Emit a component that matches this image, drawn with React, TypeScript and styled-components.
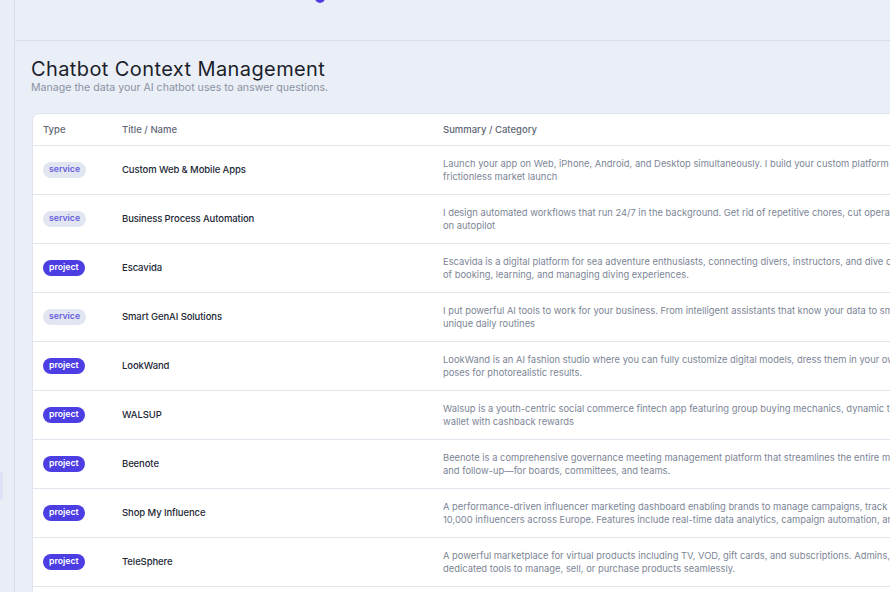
import styled, { createGlobalStyle } from "styled-components";

const GlobalStyle = createGlobalStyle`
  html, body {
    margin: 0;
    padding: 0;
    overflow: hidden;
    background: #eaeef6;
    font-family: Inter, "Liberation Sans", sans-serif;
  }
  * { box-sizing: border-box; }
`;

const Shell = styled.div`
  display: flex;
  width: 890px;
  height: 592px;
  overflow: hidden;
  background: #eaeef6;
`;

const Sidebar = styled.aside`
  flex: 0 0 15px;
  display: flex;
  flex-direction: column;
  padding-top: 472px;
  background: #e9edf5;
  border-right: 1px solid #d8dde7;
`;

const SideItem = styled.div`
  width: 3px;
  height: 28px;
  background: #dfe1f7;
  border-radius: 0 4px 4px 0;
`;

const Main = styled.main`
  flex: 1;
  min-width: 0;
  display: flex;
  flex-direction: column;
`;

const TopBar = styled.header`
  height: 41px;
  flex: 0 0 41px;
  border-bottom: 1px solid #d9dee8;
  display: flex;
  align-items: flex-start;
  padding-left: 300px;
`;

const Dot = styled.span`
  width: 10px;
  height: 10px;
  margin-top: -7px;
  border-radius: 50%;
  background: #4f3fe6;
`;

const Content = styled.section`
  padding: 16px 0 0 16px;
`;

const Title = styled.h1`
  margin: 0;
  font-size: 20px;
  line-height: 24px;
  font-weight: 400;
  color: #1b1e2b;
  letter-spacing: 0.4px;
`;

const Subtitle = styled.p`
  margin: 0;
  font-size: 10.6px;
  line-height: 14px;
  color: #8a92a2;
`;

const Card = styled.div`
  margin-top: 18px;
  margin-left: 1px;
  width: 1200px;
  background: #fff;
  border: 1px solid #dfe4ec;
  border-radius: 7px;
  overflow: hidden;
`;

const Table = styled.table`
  width: 100%;
  border-collapse: collapse;
  table-layout: fixed;
`;

const Th = styled.th<{ $w?: number }>`
  width: ${(p) => (p.$w ? `${p.$w}px` : "auto")};
  height: 31px;
  padding: 0 10px;
  text-align: left;
  font-size: 9.5px;
  font-weight: 500;
  color: #5f6776;
  border-bottom: 1px solid #e1e6ee;
`;

const Row = styled.tr`
  height: 49px;
  border-bottom: 1px solid #e1e6ee;
`;

const Td = styled.td`
  padding: 0 10px;
  vertical-align: middle;
  font-size: 10px;
  line-height: 13px;
`;

const Badge = styled.span<{ $kind: "service" | "project" }>`
  display: flex;
  width: fit-content;
  align-items: center;
  height: 16px;
  padding: 0 6px;
  border-radius: 8px;
  font-size: 8.7px;
  font-weight: 600;
  background: ${(p) => (p.$kind === "project" ? "#4c3ee3" : "#e1e6f0")};
  color: ${(p) => (p.$kind === "project" ? "#ffffff" : "#6a5fe0")};
`;

const Name = styled.div`
  font-size: 9.5px;
  line-height: 13px;
  font-weight: 500;
  letter-spacing: -0.1px;
  color: #232835;
`;

const Summary = styled.div`
  font-size: 9.4px;
  line-height: 13px;
  color: #7c8595;
  white-space: nowrap;
  span { display: block; }
`;

type Item = {
  kind: "service" | "project";
  name: string;
  lines: [string, string];
};

const items: Item[] = [
  {
    kind: "service",
    name: "Custom Web & Mobile Apps",
    lines: [
      "Launch your app on Web, iPhone, Android, and Desktop simultaneously. I build your custom platform once for a seamless and",
      "frictionless market launch",
    ],
  },
  {
    kind: "service",
    name: "Business Process Automation",
    lines: [
      "I design automated workflows that run 24/7 in the background. Get rid of repetitive chores, cut operational costs, and keep running",
      "on autopilot",
    ],
  },
  {
    kind: "project",
    name: "Escavida",
    lines: [
      "Escavida is a digital platform for sea adventure enthusiasts, connecting divers, instructors, and dive centers to simplify every step",
      "of booking, learning, and managing diving experiences.",
    ],
  },
  {
    kind: "service",
    name: "Smart GenAI Solutions",
    lines: [
      "I put powerful AI tools to work for your business. From intelligent assistants that know your data to smart automations tailored to your",
      "unique daily routines",
    ],
  },
  {
    kind: "project",
    name: "LookWand",
    lines: [
      "LookWand is an AI fashion studio where you can fully customize digital models, dress them in your own designs, and generate",
      "poses for photorealistic results.",
    ],
  },
  {
    kind: "project",
    name: "WALSUP",
    lines: [
      "Walsup is a youth-centric social commerce fintech app featuring group buying mechanics, dynamic tiered pricing, and a digital",
      "wallet with cashback rewards",
    ],
  },
  {
    kind: "project",
    name: "Beenote",
    lines: [
      "Beenote is a comprehensive governance meeting management platform that streamlines the entire meeting lifecycle—preparation, execution,",
      "and follow-up—for boards, committees, and teams.",
    ],
  },
  {
    kind: "project",
    name: "Shop My Influence",
    lines: [
      "A performance-driven influencer marketing dashboard enabling brands to manage campaigns, track sales, and collaborate with over",
      "10,000 influencers across Europe. Features include real-time data analytics, campaign automation, and transparent reporting.",
    ],
  },
  {
    kind: "project",
    name: "TeleSphere",
    lines: [
      "A powerful marketplace for virtual products including TV, VOD, gift cards, and subscriptions. Admins, resellers, and customers get",
      "dedicated tools to manage, sell, or purchase products seamlessly.",
    ],
  },
  {
    kind: "project",
    name: "Nomad Hub",
    lines: [
      "A collaborative workspace platform for remote teams, combining booking, scheduling, and community features in one place",
      "for digital nomads worldwide.",
    ],
  },
];

function App() {
  return (
    <>
      <GlobalStyle />
      <Shell>
        <Sidebar>
          <SideItem />
        </Sidebar>
        <Main>
          <TopBar>
            <Dot />
          </TopBar>
          <Content>
            <Title>Chatbot Context Management</Title>
            <Subtitle>Manage the data your AI chatbot uses to answer questions.</Subtitle>
            <Card>
              <Table>
                <thead>
                  <tr>
                    <Th $w={79}>Type</Th>
                    <Th $w={321}>Title / Name</Th>
                    <Th>Summary / Category</Th>
                  </tr>
                </thead>
                <tbody>
                  {items.map((it) => (
                    <Row key={it.name}>
                      <Td>
                        <Badge $kind={it.kind}>{it.kind}</Badge>
                      </Td>
                      <Td>
                        <Name>{it.name}</Name>
                      </Td>
                      <Td>
                        <Summary>
                          <span>{it.lines[0]}</span>
                          <span>{it.lines[1]}</span>
                        </Summary>
                      </Td>
                    </Row>
                  ))}
                </tbody>
              </Table>
            </Card>
          </Content>
        </Main>
      </Shell>
    </>
  );
}

export default App;
